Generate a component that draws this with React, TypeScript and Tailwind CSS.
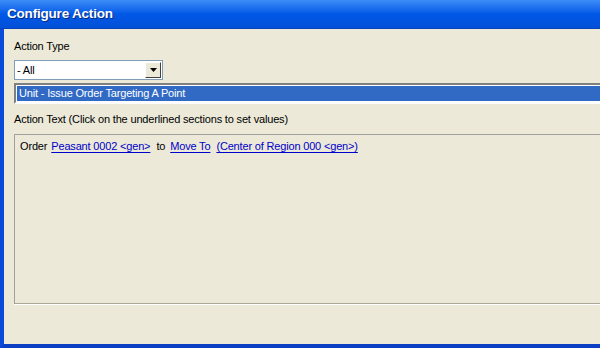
import React from 'react';

const font = { fontFamily: '"Liberation Sans", Arial, sans-serif' };

export default function App() {
    return (
        <div className="w-[600px] h-[348px] overflow-hidden flex flex-col text-[11px] tracking-[-0.17px] text-black" style={font}>
            {/* Title bar */}
            <div className="h-[29px] shrink-0 flex items-center pl-[7px] bg-gradient-to-b from-[#3c8cf8] via-[#0058e6] to-[#0350d8] border-b border-[#0842b8]">
                <span className="text-white font-bold text-[13.5px] tracking-[-0.2px] [text-shadow:1px_1px_0_#0a2a80]">
                    Configure Action
                </span>
            </div>

            {/* Client area */}
            <div className="flex-1 flex flex-col bg-[#ece9d8] border-l-[4px] border-b-[4px] border-l-[#0a4ad8] border-b-[#0a3fc4] pl-[10px] pt-[11px]">
                <div className="leading-[13px]">Action Type</div>

                {/* Dropdown */}
                <div className="mt-[7px] w-[149px] h-[20px] flex items-stretch bg-white border border-[#7f9db9]">
                    <div className="flex-1 flex items-center pl-[2px] leading-none">- All</div>
                    <div className="w-[16px] m-[1px] bg-[#ece9d8] border border-t-white border-l-white border-r-[#404040] border-b-[#404040] flex items-center justify-center">
                        <svg width="7" height="4" viewBox="0 0 7 4">
                            <path d="M0 0h7L3.5 4z" fill="#000" />
                        </svg>
                    </div>
                </div>

                {/* List box */}
                <div className="mt-[3px] h-[21px] border-t-[2px] border-l-[2px] border-t-[#808080] border-l-[#808080] border-b-[2px] border-b-white bg-white pl-[1px] pt-[1px]">
                    <div className="h-[15px] bg-[#316ac5] text-white flex items-center pl-[2px] leading-none">
                        Unit - Issue Order Targeting A Point
                    </div>
                </div>

                <div className="mt-[9px] leading-[13px]">Action Text (Click on the underlined sections to set values)</div>

                {/* Action text box */}
                <div className="mt-[8px] h-[170px] border-t border-l border-[#a0a0a0] shadow-[0_1px_0_#fff] flex">
                    <div className="flex-1 border-b border-[#aca899] pl-[5px] pt-[5px] flex gap-[5px] items-start leading-[13px]">
                        <span>Order</span>
                        <span className="text-[#0000cc] underline underline-offset-2 -ml-[1px]">Peasant 0002 &lt;gen&gt;</span>
                        <span className="ml-[1px]">to</span>
                        <span className="text-[#0000cc] underline underline-offset-2">Move To</span>
                        <span className="text-[#0000cc] underline underline-offset-2 ml-[1px]">(Center of Region 000 &lt;gen&gt;)</span>
                    </div>
                </div>
            </div>
        </div>
    );
}
